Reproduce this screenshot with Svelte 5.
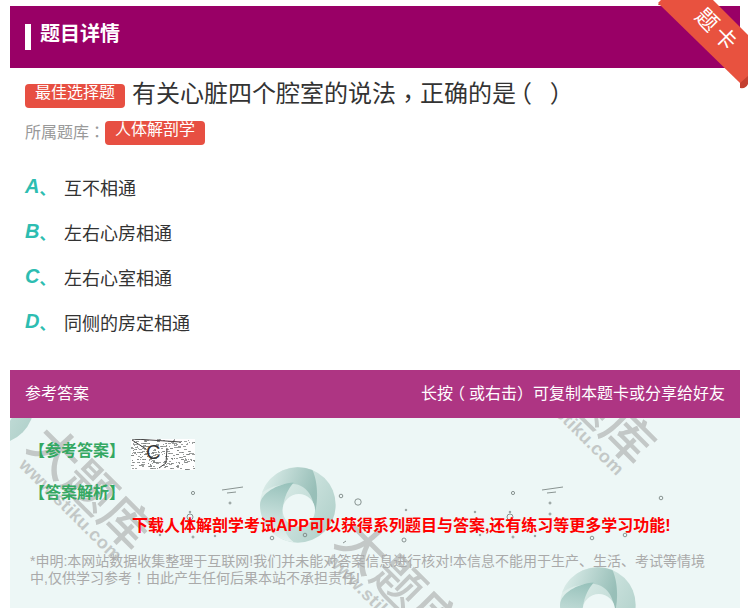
<script>
  const options = [
    { key: 'A', text: '互不相通' },
    { key: 'B', text: '左右心房相通' },
    { key: 'C', text: '左右心室相通' },
    { key: 'D', text: '同侧的房定相通' }
  ];

  // watermark and logo spots, measured from the answer panel's corner
  const marks = [
    { x: -23, y: 49 },
    { x: 285, y: 144 },
    { x: 479, y: -37 }
  ];
  const logos = [
    { x: -52, y: -50 },
    { x: 250, y: 49 },
    { x: 550, y: 149 }
  ];

  const specks = [
    [193, 493, 1.6], [230, 503, 1], [190, 512, 0.8], [190, 517, 3], [160, 535, 0.8],
    [193, 537, 1], [215, 536, 0.8], [272, 538, 1.8], [341, 496, 1.8], [358, 502, 3.2],
    [305, 535, 1.8], [513, 493, 1.6], [550, 503, 1], [510, 512, 0.8], [510, 517, 3],
    [480, 535, 0.8], [404, 540, 2], [513, 537, 1], [535, 536, 0.8], [592, 538, 1.8],
    [661, 498, 1.8], [625, 535, 1.8], [406, 510, 0.8], [475, 512, 0.8], [550, 514, 1]
  ];

  // rough scan noise behind the C
  const noise = [];
  let seed = 17;
  for (let i = 0; i < 300; i++) {
    seed = (seed * 137 + 59) % 1009;
    const x = seed % 64;
    seed = (seed * 137 + 59) % 1009;
    const y = seed % 31;
    noise.push([x, y, 1 + (seed % 3)]);
  }
</script>

<div class="page">
  <header class="title-bar">
    <span class="title-mark"></span>
    <h1>题目详情</h1>
  </header>

  <div class="ribbon">
    <svg width="90" height="90" viewBox="0 0 90 90">
      <path d="M0 5 Q3 0 9 0 L14 6 Z" fill="#b9392c" />
      <path d="M82 70 L90 62 L90 84 Q88 89 82 88 Z" fill="#c43f30" />
      <path d="M3 0 L55 0 L90 35 L90 76 L82 83 L0 3 Z" fill="#e8523f" />
    </svg>
    <span class="ribbon-text">题卡</span>
  </div>

  <section class="question">
    <div class="stem">
      <span class="tag">最佳选择题</span>
      <span class="stem-text">有关心脏四个腔室的说法<span class="tc low">，</span>正确的是<span class="tc open">（</span> <span class="tc close">）</span></span>
    </div>
    <div class="source">
      <span class="source-label">所属题库<span class="tc">：</span></span>
      <span class="tag">人体解剖学</span>
    </div>
    <ul class="options">
      {#each options as opt}
        <li>
          <span class="opt-key">{opt.key}<i>、</i></span>
          <span>{opt.text}</span>
        </li>
      {/each}
    </ul>
  </section>

  <section class="answer">
    <div class="answer-head">
      <span>参考答案</span>
      <span>长按<span class="tc open-sm">（</span>或右击<span class="tc">）</span>可复制本题卡或分享给好友</span>
    </div>
    <div class="answer-body">
      {#each logos as logo}
        <svg class="logo" style="left:{logo.x}px;top:{logo.y}px" width="76" height="76" viewBox="30 22 225 225">
          <defs>
            <linearGradient id="lobe-a-{logo.x}" x1="0" y1="0" x2="1" y2="0.3">
              <stop offset="0" stop-color="#e2f1ee" />
              <stop offset="1" stop-color="#98bfb8" />
            </linearGradient>
            <linearGradient id="lobe-b-{logo.x}" x1="0.6" y1="0" x2="0.5" y2="1">
              <stop offset="0" stop-color="#98c2bb" />
              <stop offset="1" stop-color="#e8f4f2" />
            </linearGradient>
            <linearGradient id="lobe-c-{logo.x}" x1="0" y1="0" x2="1" y2="0.6">
              <stop offset="0" stop-color="#e8f4f1" />
              <stop offset="1" stop-color="#b4d3cd" />
            </linearGradient>
          </defs>
          <circle cx="142" cy="134" r="112" fill="url(#lobe-c-{logo.x})" />
          <path d="M36 98 A112 112 0 0 1 185 31 C200 60 205 120 190 165 C195 110 165 68 115 72 C85 74 55 82 36 98 Z" fill="url(#lobe-a-{logo.x})" />
          <path d="M130 68 C80 72 32 100 30 134 A112 112 0 0 0 130 245 C105 225 92 190 97 150 C100 110 115 85 130 68 Z" fill="url(#lobe-b-{logo.x})" />
          <circle cx="145" cy="150" r="48" fill="#edf7f6" />
        </svg>
      {/each}

      {#each marks as mark}
        <div class="watermark" style="left:{mark.x}px;top:{mark.y}px">
          <span class="wm-name">大题库</span>
          <span class="wm-url">www.stiku.com</span>
        </div>
      {/each}

      <svg class="specks" width="730" height="190" viewBox="10 418 730 190">
        {#each specks as [x, y, r]}
          <circle cx={x} cy={y} {r} fill="none" stroke="#7d8886" stroke-width="0.9" />
        {/each}
        <path d="M222 490 L243 487 M227 493 L236 492 M542 490 L563 487 M547 493 L556 492 M343 543 L346 541" stroke="#8a9492" fill="none" />
      </svg>

      <div class="answer-line">
        <span class="green">【参考答案】</span>
        <span class="scan">
          <svg width="64" height="31" viewBox="0 0 64 31">
            <rect width="64" height="31" fill="#fff" />
            {#each noise as [x, y, w]}
              <rect {x} {y} width={w} height="1" fill="#7b7f7e" opacity="0.75" />
            {/each}
            <path d="M1 1 L15 10 M4 0 L50 3 M36 9 L35 24 L28 29" stroke="#444" fill="none" />
          </svg>
          <b>C</b>
        </span>
      </div>
      <div class="green analysis">【答案解析】</div>
      <p class="promo">下载人体解剖学考试APP可以获得系列题目与答案,还有练习等更多学习功能!</p>
      <p class="notice">*申明:本网站数据收集整理于互联网!我们并未能对答案信息进行核对!本信息不能用于生产、生活、考试等情境中,仅供学习参考<span class="tc">！</span>由此产生任何后果本站不承担责任!</p>
    </div>
  </section>
</div>

<style>
  :global(body) {
    margin: 0;
    background: #fff;
  }
  .page {
    position: relative;
    height: 608px;
    padding: 6px 10px 0;
    box-sizing: border-box;
    overflow: hidden;
    font-family: "Liberation Sans", "Noto Sans CJK SC", sans-serif;
    color: #333;
  }
  .tc {
    font-family: "Noto Sans CJK TC", sans-serif;
  }
  .low {
    vertical-align: -5px;
  }
  .open {
    margin: 0 8px 0 -8px;
  }
  .close {
    margin-left: 3px;
  }
  .open-sm {
    margin: 0 4px 0 -4px;
  }
  .title-bar {
    display: flex;
    align-items: center;
    gap: 9px;
    height: 62px;
    padding-left: 15px;
    background: #990066;
    color: #fff;
  }
  .title-mark {
    width: 6px;
    height: 26px;
    align-self: flex-start;
    margin-top: 18px;
    background: #fff;
  }
  h1 {
    margin: -6px 0 0;
    font-size: 20px;
    font-weight: 700;
    line-height: 26px;
  }
  .ribbon {
    position: absolute;
    top: 0;
    right: 2px;
    width: 90px;
    height: 90px;
  }
  .ribbon svg {
    display: block;
  }
  .ribbon-text {
    position: absolute;
    left: 29px;
    top: 17px;
    width: 60px;
    color: #fff;
    font-size: 22px;
    letter-spacing: 4px;
    line-height: 28px;
    text-align: center;
    white-space: nowrap;
    transform: rotate(45deg);
  }
  .question {
    padding: 12px 15px 0;
  }
  .stem {
    display: flex;
    align-items: center;
    gap: 7px;
    height: 28px;
  }
  .stem .tag {
    margin-top: 4px;
  }
  .stem-text {
    font-size: 24px;
    line-height: 28px;
    color: #333;
    white-space: nowrap;
  }
  .tag {
    display: inline-block;
    height: 24px;
    padding: 0 10px;
    border-radius: 4px;
    background: #e74f42;
    color: #fff;
    font-size: 16px;
    line-height: 18px;
    white-space: nowrap;
  }
  .source {
    display: flex;
    align-items: center;
    height: 24px;
    margin-top: 13px;
    font-size: 16px;
    color: #999;
  }
  .source-label {
    margin-bottom: 4px;
  }
  .options {
    margin: 19px 0 0;
    padding: 0;
    list-style: none;
  }
  .options li {
    display: flex;
    align-items: center;
    height: 45px;
    font-size: 18px;
    color: #333;
  }
  .opt-key {
    display: flex;
    align-items: center;
    width: 39px;
    font-size: 20px;
    font-style: italic;
    font-weight: 700;
    color: #2dbdb1;
  }
  .opt-key i {
    font-family: "Noto Sans CJK SC", sans-serif;
    font-style: normal;
    font-weight: 700;
    font-size: 16px;
    margin-top: 2px;
  }
  .answer {
    margin-top: 26px;
  }
  .answer-head {
    display: flex;
    justify-content: space-between;
    align-items: center;
    height: 48px;
    padding: 0 15px 4px;
    box-sizing: border-box;
    background: #ae3583;
    color: #fff;
    font-size: 16px;
    position: relative;
    z-index: 2;
  }
  .answer-body {
    position: relative;
    height: 190px;
    overflow: hidden;
    background: #edf7f6;
  }
  .logo,
  .specks {
    position: absolute;
  }
  .specks {
    left: 0;
    top: 0;
  }
  .watermark {
    position: absolute;
    width: 190px;
    display: flex;
    flex-direction: column;
    align-items: center;
    color: #c3c8c7;
    transform: rotate(45deg);
  }
  .wm-name {
    font-size: 50px;
    font-weight: 500;
    line-height: 36px;
    white-space: nowrap;
  }
  .wm-url {
    font-size: 18px;
    font-weight: 700;
    line-height: 22px;
    letter-spacing: 0.5px;
    margin-left: 4px;
  }
  .answer-line {
    position: relative;
    display: flex;
    align-items: center;
    gap: 6px;
    margin: 21px 0 0 19px;
    height: 31px;
  }
  .answer-line .green {
    margin-bottom: 8px;
  }
  .green {
    color: #34a862;
    font-size: 16px;
    font-weight: 700;
    line-height: 24px;
    white-space: nowrap;
  }
  .scan {
    position: relative;
    width: 64px;
    height: 31px;
  }
  .scan svg {
    display: block;
  }
  .scan b {
    position: absolute;
    left: 15px;
    top: 1px;
    font-size: 20px;
    font-weight: 400;
    line-height: 24px;
    color: #333;
  }
  .analysis {
    position: relative;
    margin: 11px 0 0 19px;
  }
  .promo {
    position: relative;
    margin: 9px 0 0 122px;
    color: #f00;
    font-size: 16px;
    font-weight: 700;
    line-height: 24px;
    white-space: nowrap;
  }
  .notice {
    position: relative;
    margin: 15px 25px 0 20px;
    color: #aaa;
    font-size: 14px;
    line-height: 16px;
  }
</style>
